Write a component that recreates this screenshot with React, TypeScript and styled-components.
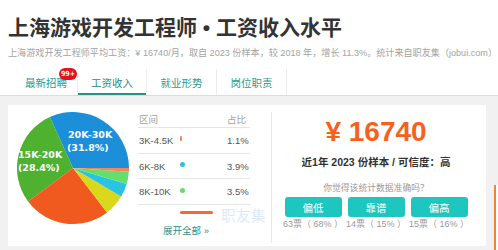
import React from "react";
import styled, { createGlobalStyle } from "styled-components";

const GlobalStyle = createGlobalStyle`
  html, body {
    margin: 0;
    padding: 0;
    background: #fff;
    font-family: "Liberation Sans", "Noto Sans CJK SC", sans-serif;
    overflow: hidden;
  }
`;

const CJK = `"Liberation Sans", "Noto Sans CJK SC", sans-serif`;

type Slice = { pct: number; color: string };

const slices: Slice[] = [
  { pct: 31.8, color: "#1d8fd9" },
  { pct: 28.4, color: "#4eb12f" },
  { pct: 25.2, color: "#f05a1e" },
  { pct: 6.1, color: "#dad81c" },
  { pct: 3.9, color: "#29c3e3" },
  { pct: 3.5, color: "#62e06b" },
  { pct: 1.1, color: "#f4845a" },
];

type Row = { range: string; pct: number; color: string };

const rows: Row[] = [
  { range: "3K-4.5K", pct: 1.1, color: "#f4845a" },
  { range: "6K-8K", pct: 3.9, color: "#29c3e3" },
  { range: "8K-10K", pct: 3.5, color: "#62e06b" },
];

const votes = [
  { label: "偏低", count: "63票（ 68% ）" },
  { label: "靠谱", count: "14票（ 15% ）" },
  { label: "偏高", count: "15票（ 16% ）" },
];

const Header = styled.header`
  padding: 14px 8px 0;
`;

const Title = styled.h1`
  margin: 0;
  font-family: ${CJK};
  font-size: 21px;
  line-height: 28px;
  font-weight: bold;
  color: #333;
  white-space: nowrap;
`;

const Sub = styled.p`
  margin: 5px 0 0;
  font-family: ${CJK};
  font-size: 9.1px;
  line-height: 12px;
  color: #a3a3a3;
  white-space: nowrap;
`;

const TabBar = styled.nav`
  margin-top: 10px;
  display: flex;
  padding-left: 7px;
  border-bottom: 1px solid #dcdcdc;
`;

const Tab = styled.div<{ active?: boolean }>`
  position: relative;
  width: 70px;
  height: 26px;
  display: flex;
  align-items: center;
  justify-content: center;
  font-family: ${CJK};
  font-size: 10.5px;
  color: ${(p) => (p.active ? "#1f8a84" : "#2b9b93")};
  border-right: 1px solid #ececec;
  border-left: ${(p) => (p.active ? "1px solid #ececec" : "none")};
  box-shadow: ${(p) => (p.active ? "inset 0 -2px 0 #21948d" : "none")};
  box-sizing: border-box;

  &:first-child {
    border-right: none;
    padding-left: 8px;
  }
`;

const Badge = styled.span`
  position: absolute;
  top: -1px;
  right: 0;
  height: 12px;
  padding: 0 2px;
  border-radius: 6px;
  background: #e60f1c;
  color: #fff;
  font-family: "DejaVu Sans Condensed", "DejaVu Sans", sans-serif;
  font-size: 7px;
  font-weight: bold;
  line-height: 12px;
  white-space: nowrap;
`;

const Main = styled.main`
  background: #f1f1f1;
  padding: 9px 0 0 8px;
  height: 154px;
  box-sizing: border-box;
  display: flex;
  gap: 8px;
  overflow: hidden;
`;

const Card = styled.section`
  position: relative;
  flex: 0 0 478px;
  height: 141px;
  background: #fff;
  display: flex;
  padding: 7px 8px 3px 9px;
  box-sizing: border-box;
`;

const Side = styled.div`
  flex: 0 0 4px;
  margin-top: 80px;
  border-left: 2px solid #f5822f;
  background: #fff;
`;

const PieBox = styled.div`
  width: 112px;
  height: 112px;
  flex-shrink: 0;
`;

const PieLabel = styled.text`
  font-family: "DejaVu Sans", sans-serif;
  font-size: 9.5px;
  font-weight: bold;
  fill: #fff;
`;

const Table = styled.div`
  width: 112px;
  margin-left: 9px;
  display: flex;
  flex-direction: column;
  font-family: ${CJK};
`;

const TRow = styled.div<{ head?: boolean }>`
  display: grid;
  grid-template-columns: 41px 47px 1fr;
  align-items: center;
  height: ${(p) => (p.head ? "15px" : "25px")};
  border-bottom: 1px solid #e6e6e6;
  font-size: 9.5px;
  color: ${(p) => (p.head ? "#a0a0a0" : "#555")};
  padding-left: 1px;
`;

const Bar = styled.span<{ color: string; h?: number }>`
  display: block;
  height: ${(p) => p.h ?? 5}px;
  border-radius: 3px;
  background: ${(p) => p.color};
  margin-top: -3px;
`;

const MoreBox = styled.div`
  position: relative;
  height: 38px;
  display: flex;
  flex-direction: column;
`;

const FadedBar = styled.div`
  padding: 9px 0 0 42px;
`;

const More = styled.a`
  margin: 9px 0 0 25px;
  font-size: 9.5px;
  color: #2a8f89;
  text-decoration: none;
`;

const Watermark = styled.span`
  position: absolute;
  left: 213px;
  top: 99px;
  font-family: ${CJK};
  font-size: 14.5px;
  color: #e0eaf7;
  letter-spacing: 0.5px;
`;

const Divider = styled.div`
  width: 1px;
  margin-left: 21px;
  background: #e8e8e8;
`;

const Panel = styled.div`
  flex: 1;
  display: flex;
  flex-direction: column;
  align-items: center;
  font-family: ${CJK};
  padding-left: 2px;
`;

const Salary = styled.div`
  margin-top: 4px;
  font-family: "Liberation Sans", sans-serif;
  font-size: 28px;
  line-height: 32px;
  font-weight: bold;
  color: #f7621a;
`;

const Meta = styled.div`
  margin-top: 7px;
  font-size: 10.5px;
  line-height: 14px;
  font-weight: bold;
  color: #333;
`;

const Question = styled.div`
  margin-top: 13px;
  font-size: 8.8px;
  line-height: 12px;
  color: #9a9a9a;
`;

const Votes = styled.div`
  margin-top: 3px;
  display: flex;
  gap: 6px;
`;

const VoteCol = styled.div`
  display: flex;
  flex-direction: column;
  align-items: center;
  width: 57px;
`;

const VoteButton = styled.button`
  width: 57px;
  height: 20px;
  border: none;
  border-radius: 3px;
  background: #1ec6c0;
  color: #fff;
  font-family: ${CJK};
  font-size: 10.5px;
  padding: 0;
`;

const VoteCount = styled.span`
  font-size: 9px;
  line-height: 14px;
  color: #9a9a9a;
  white-space: nowrap;
`;

const Pie: React.FC = () => {
  const cx = 56;
  const cy = 56;
  const r = 56;
  let a = 0;
  const pt = (deg: number) => {
    const rad = (deg * Math.PI) / 180;
    return `${(cx + r * Math.cos(rad)).toFixed(2)} ${(cy - r * Math.sin(rad)).toFixed(2)}`;
  };
  return (
    <svg width="112" height="112" viewBox="0 0 112 112">
      {slices.map((s, i) => {
        const a1 = a;
        const a2 = a + (s.pct / 100) * 360;
        a = a2;
        const large = a2 - a1 > 180 ? 1 : 0;
        return (
          <path
            key={i}
            d={`M ${cx} ${cy} L ${pt(a1)} A ${r} ${r} 0 ${large} 0 ${pt(a2)} Z`}
            fill={s.color}
          />
        );
      })}
      <PieLabel x="51" y="25.5">20K-30K</PieLabel>
      <PieLabel x="50" y="39">(31.8%)</PieLabel>
      <PieLabel x="1" y="46">15K-20K</PieLabel>
      <PieLabel x="1" y="58.5">(28.4%)</PieLabel>
    </svg>
  );
};

export default function App() {
  return (
    <>
      <GlobalStyle />
      <Header>
        <Title>上海游戏开发工程师 • 工资收入水平</Title>
        <Sub>
          上海游戏开发工程师平均工资：¥ 16740/月，取自 2023 份样本，较 2018 年，增长 11.3%。统计来自职友集（jobui.com）
        </Sub>
      </Header>
      <TabBar>
        <Tab>
          最新招聘
          <Badge>99+</Badge>
        </Tab>
        <Tab active>工资收入</Tab>
        <Tab>就业形势</Tab>
        <Tab>岗位职责</Tab>
      </TabBar>
      <Main>
        <Card>
          <PieBox>
            <Pie />
          </PieBox>
          <Table>
            <TRow head>
              <span>区间</span>
              <span />
              <span>占比</span>
            </TRow>
            {rows.map((row) => (
              <TRow key={row.range}>
                <span>{row.range}</span>
                <span>
                  <Bar color={row.color} style={{ width: Math.max(1.5, row.pct * 1.3) }} />
                </span>
                <span>{row.pct}%</span>
              </TRow>
            ))}
            <MoreBox>
              <FadedBar>
                <Bar color="#f06a3a" h={3} style={{ width: 33 }} />
              </FadedBar>
              <More href="#">展开全部 »</More>
            </MoreBox>
          </Table>
          <Watermark>职友集</Watermark>
          <Divider />
          <Panel>
            <Salary>¥ 16740</Salary>
            <Meta>近1年 2023 份样本 / 可信度：高</Meta>
            <Question>你觉得该统计数据准确吗？</Question>
            <Votes>
              {votes.map((v) => (
                <VoteCol key={v.label}>
                  <VoteButton>{v.label}</VoteButton>
                  <VoteCount>{v.count}</VoteCount>
                </VoteCol>
              ))}
            </Votes>
          </Panel>
        </Card>
        <Side />
      </Main>
    </>
  );
}
